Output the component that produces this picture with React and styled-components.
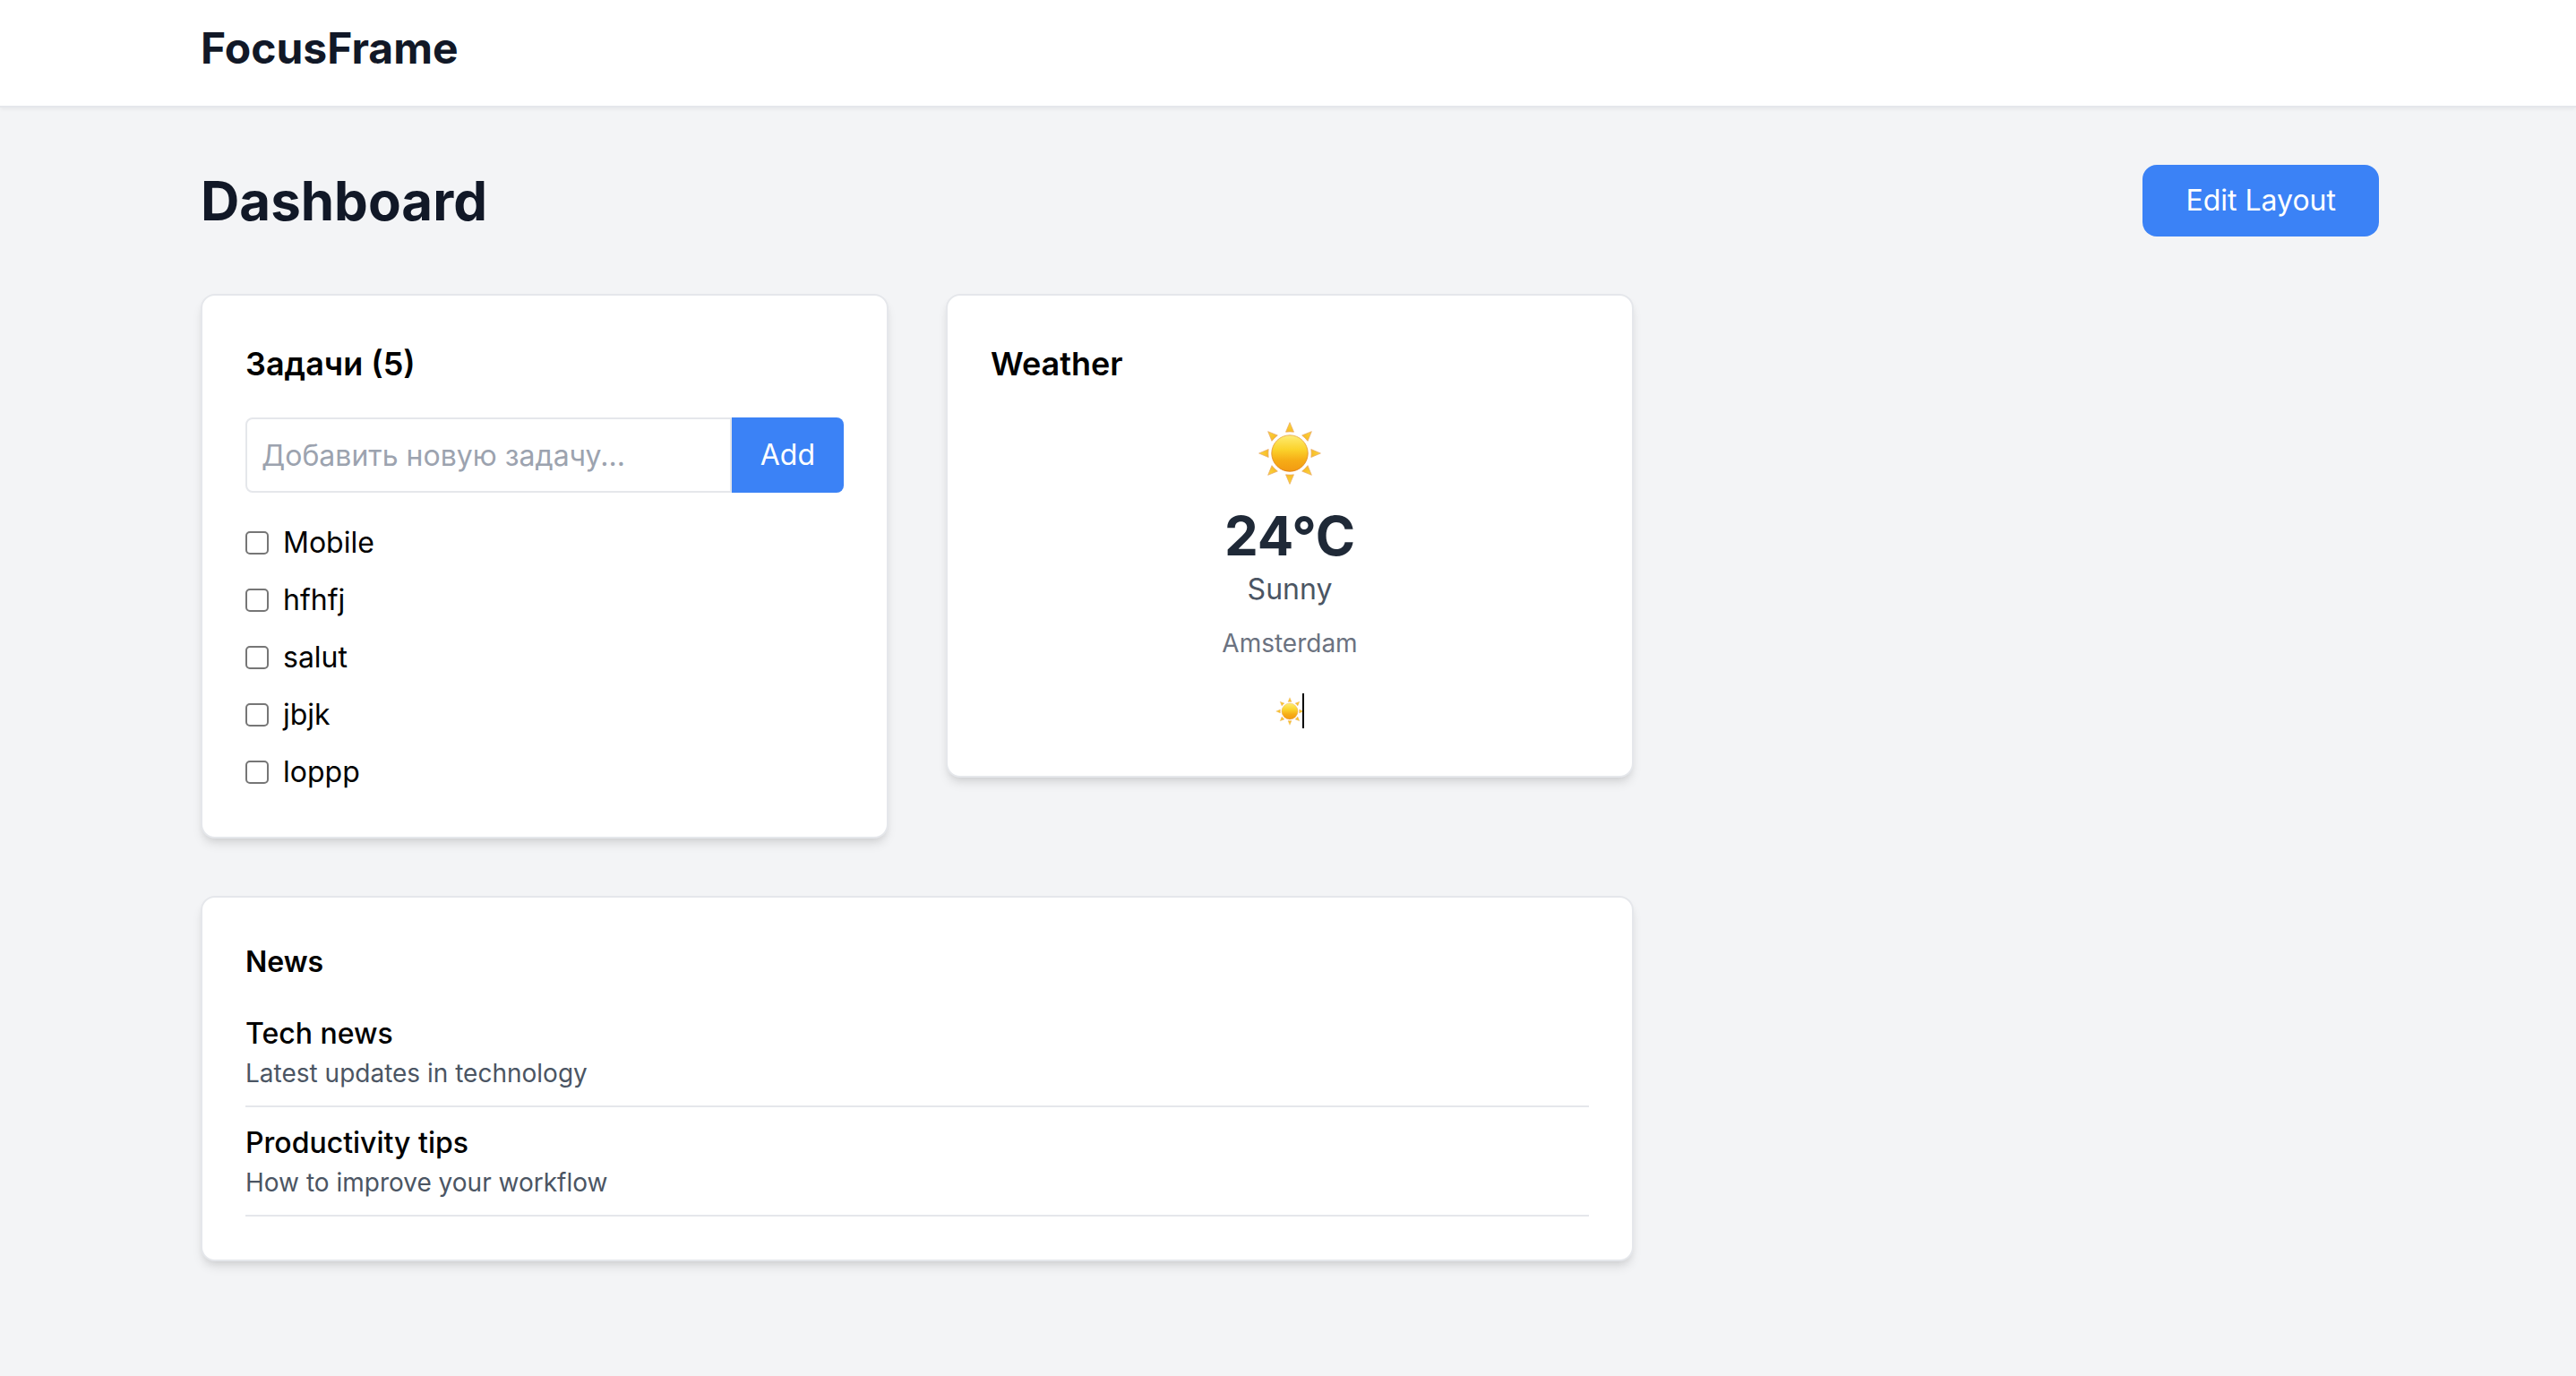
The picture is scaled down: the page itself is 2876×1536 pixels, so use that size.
import React, { useId, useState } from "react";
import styled, { createGlobalStyle } from "styled-components";

const GlobalStyle = createGlobalStyle`
  *, *::before, *::after { box-sizing: border-box; }
  body {
    margin: 0;
    background: #f3f4f6;
    color: #000;
    font-family: Inter, "Liberation Sans", sans-serif;
    font-size: 32px;
    line-height: 48px;
  }
  h1, h2, h3, p, ul { margin: 0; padding: 0; }
  ul { list-style: none; }
  button, input { font: inherit; margin: 0; }
`;

const Page = styled.div`
  min-height: 100vh;
  background: #f3f4f6;
`;

const Container = styled.div`
  max-width: 2560px;
  margin: 0 auto;
  padding: 0 62px 0 66px;
`;

const Header = styled.header`
  padding: 22px 0 32px;
  background: #fff;
  border-bottom: 2px solid #e5e7eb;
  box-shadow: 0 2px 4px rgba(0, 0, 0, 0.05);
`;

const Brand = styled.h1`
  color: #111827;
  font-size: 48px;
  line-height: 64px;
  font-weight: 700;
`;

const Main = styled.main`
  padding: 64px 0;
`;

const TitleRow = styled.div`
  display: flex;
  align-items: center;
  justify-content: space-between;
  margin-bottom: 64px;
`;

const PageTitle = styled.h2`
  color: #111827;
  font-size: 60px;
  line-height: 72px;
  font-weight: 700;
`;

const Button = styled.button`
  border: 0;
  background: #3b82f6;
  color: #fff;
  cursor: pointer;
`;

const EditButton = styled(Button)`
  padding: 16px 48px;
  border-radius: 16px;
`;

const Grid = styled.div`
  display: grid;
  grid-template-columns: repeat(3, minmax(0, 1fr));
  gap: 64px;
  align-items: start;
`;

const Card = styled.section`
  grid-column: span ${({ $span = 1 }) => $span};
  padding: 48px;
  background: #fff;
  border: 2px solid #e5e7eb;
  border-radius: 16px;
  box-shadow: 0 8px 12px -2px rgba(0, 0, 0, 0.1), 0 4px 8px -4px rgba(0, 0, 0, 0.1);
`;

const CardTitle = styled.h3`
  margin-bottom: 32px;
  font-size: ${({ $small }) => ($small ? 32 : 36)}px;
  line-height: ${({ $small }) => ($small ? 48 : 56)}px;
  font-weight: 600;
`;

const AddForm = styled.form`
  display: flex;
  margin-bottom: 32px;
`;

const TaskInput = styled.input`
  flex: 1;
  min-width: 0;
  height: 84px;
  padding: 16px;
  background: #fff;
  border: 2px solid #e5e7eb;
  border-radius: 8px 0 0 8px;
  outline: none;
  &::placeholder { color: #9ca3af; opacity: 1; }
`;

const AddButton = styled(Button)`
  padding: 16px 32px;
  border-radius: 0 8px 8px 0;
`;

const TaskList = styled.ul`
  display: grid;
  gap: 16px;
`;

const Task = styled.li`
  display: flex;
  align-items: center;
  gap: 16px;
`;

const Checkbox = styled.input`
  appearance: none;
  width: 26px;
  height: 26px;
  background: #fff;
  border: 2px solid #767676;
  border-radius: 5px;
  &:checked { background: #3b82f6; border-color: #3b82f6; }
`;

const Weather = styled.div`
  display: flex;
  flex-direction: column;
  align-items: center;
`;

const WeatherIcon = styled.div`
  display: flex;
  align-items: center;
  height: 80px;
  margin-bottom: 16px;
`;

const Temperature = styled.p`
  color: #1f2937;
  font-size: 60px;
  line-height: 72px;
  font-weight: 700;
`;

const Condition = styled.p`
  color: #4b5563;
`;

const City = styled.p`
  margin-top: 16px;
  color: #6b7280;
  font-size: 28px;
  line-height: 40px;
`;

const IconField = styled.div`
  position: relative;
  display: flex;
  align-items: center;
  height: 48px;
  margin-top: 32px;
`;

const Caret = styled.span`
  position: absolute;
  top: 4px;
  right: 0;
  width: 2px;
  height: 39px;
  background: #000;
`;

const NewsList = styled.ul`
  display: grid;
  gap: 16px;
`;

const NewsItem = styled.li`
  padding-bottom: 16px;
  border-bottom: 2px solid #e5e7eb;
`;

const NewsTitle = styled.p`
  font-weight: 500;
`;

const NewsText = styled.p`
  color: #4b5563;
  font-size: 28px;
  line-height: 40px;
`;

const rays = [0, 45, 90, 135, 180, 225, 270, 315];

function Sun({ size }) {
  const id = useId();
  return (
    <svg width={size} height={size} viewBox="-36 -36 72 72" role="img" aria-label="Sunny">
      <defs>
        <linearGradient id={`${id}disc`} x1="0" y1="0" x2="0" y2="1">
          <stop offset="0" stopColor="#fdec7c" />
          <stop offset="0.12" stopColor="#fde45c" />
          <stop offset="0.4" stopColor="#fbd22b" />
          <stop offset="0.7" stopColor="#f6ac16" />
          <stop offset="1" stopColor="#f29a12" />
        </linearGradient>
        <linearGradient id={`${id}edge`} x1="0" y1="0" x2="0" y2="1">
          <stop offset="0" stopColor="#e9b04a" />
          <stop offset="1" stopColor="#e07f16" />
        </linearGradient>
        <linearGradient id={`${id}ray`} gradientUnits="userSpaceOnUse" x1="0" y1="-35" x2="0" y2="-23">
          <stop offset="0" stopColor="#fbd93a" />
          <stop offset="1" stopColor="#f7b928" />
        </linearGradient>
      </defs>
      {rays.map((angle) => (
        <path
          key={angle}
          d="M0-34.4 4.5-23.8Q0-24.4-4.5-23.8Z"
          transform={`rotate(${angle})`}
          fill={`url(#${id}ray)`}
          stroke="#e8a765"
          strokeWidth="0.7"
          strokeLinejoin="round"
        />
      ))}
      <circle r="20.2" fill={`url(#${id}disc)`} stroke={`url(#${id}edge)`} strokeWidth="0.9" />
    </svg>
  );
}

const tasks = ["Mobile", "hfhfj", "salut", "jbjk", "loppp"];

const news = [
  { title: "Tech news", text: "Latest updates in technology" },
  { title: "Productivity tips", text: "How to improve your workflow" },
];

export default function App() {
  const [draft, setDraft] = useState("");
  return (
    <Page>
      <GlobalStyle />
      <Header>
        <Container>
          <Brand>FocusFrame</Brand>
        </Container>
      </Header>
      <Main>
        <Container>
          <TitleRow>
            <PageTitle>Dashboard</PageTitle>
            <EditButton type="button">Edit Layout</EditButton>
          </TitleRow>
          <Grid>
            <Card>
              <CardTitle>{`Задачи (${tasks.length})`}</CardTitle>
              <AddForm onSubmit={(event) => event.preventDefault()}>
                <TaskInput
                  type="text"
                  aria-label="Добавить новую задачу"
                  placeholder="Добавить новую задачу..."
                  value={draft}
                  onChange={(event) => setDraft(event.target.value)}
                />
                <AddButton type="submit">Add</AddButton>
              </AddForm>
              <TaskList>
                {tasks.map((task) => (
                  <Task key={task}>
                    <Checkbox type="checkbox" id={`task-${task}`} />
                    <label htmlFor={`task-${task}`}>{task}</label>
                  </Task>
                ))}
              </TaskList>
            </Card>
            <Card>
              <CardTitle>Weather</CardTitle>
              <Weather>
                <WeatherIcon>
                  <Sun size={72} />
                </WeatherIcon>
                <Temperature>24°C</Temperature>
                <Condition>Sunny</Condition>
                <City>Amsterdam</City>
                <IconField>
                  <Sun size={32} />
                  <Caret />
                </IconField>
              </Weather>
            </Card>
            <Card $span={2}>
              <CardTitle $small>News</CardTitle>
              <NewsList>
                {news.map((item) => (
                  <NewsItem key={item.title}>
                    <NewsTitle>{item.title}</NewsTitle>
                    <NewsText>{item.text}</NewsText>
                  </NewsItem>
                ))}
              </NewsList>
            </Card>
          </Grid>
        </Container>
      </Main>
    </Page>
  );
}
